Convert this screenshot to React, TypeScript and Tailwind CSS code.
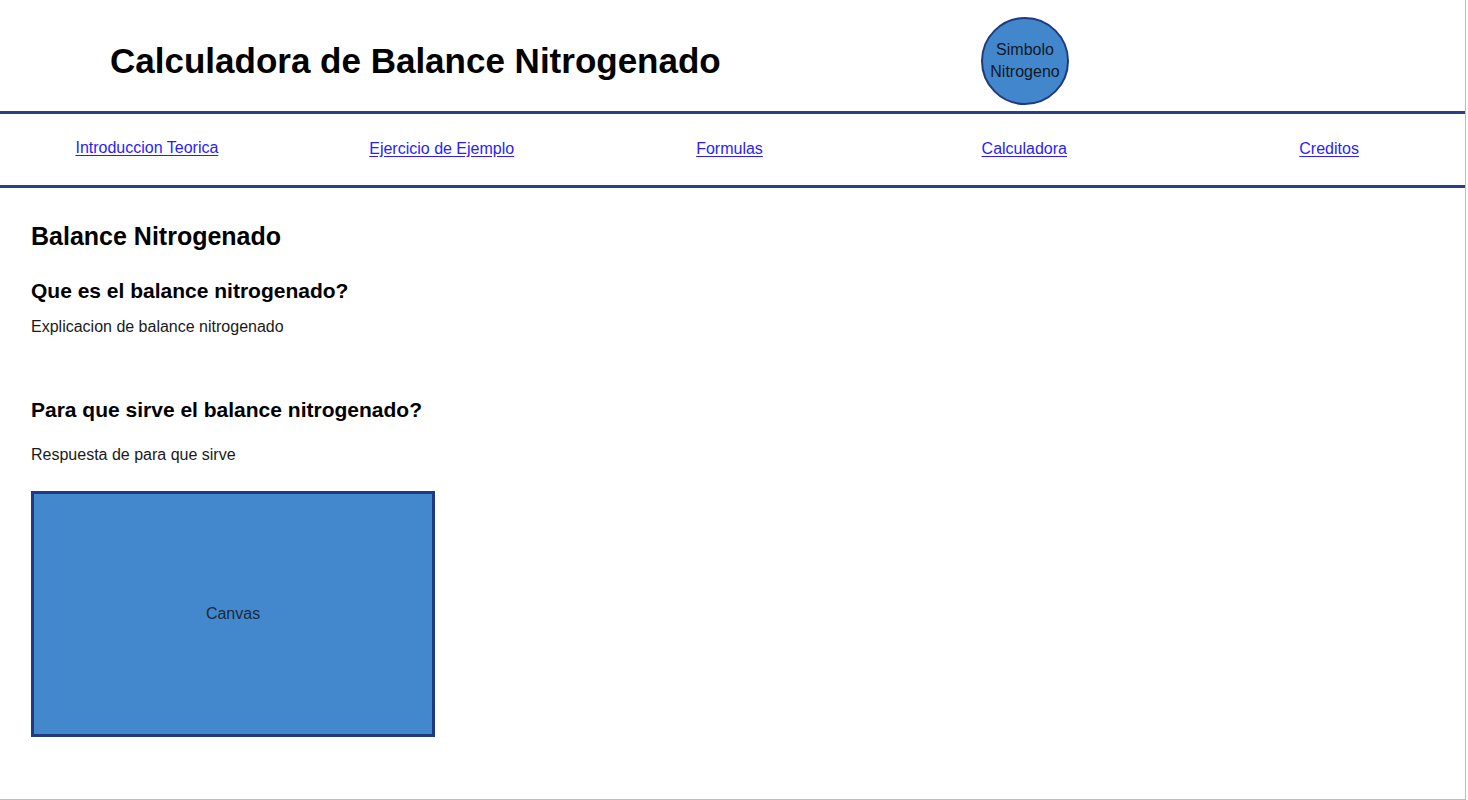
const links = [
    { label: "Introduccion Teorica", col: "w-[294px]", shift: "-mt-[3px]" },
    { label: "Ejercicio de Ejemplo", col: "w-[296px]", shift: "-mt-[1px]" },
    { label: "Formulas", col: "w-[280px]", shift: "-mt-[1px]" },
    { label: "Calculadora", col: "w-[310px]", shift: "-mt-[1px]" },
    { label: "Creditos", col: "w-[286px] pl-[14px]", shift: "-mt-[1px]" },
];

function Header() {
    return (
        <header className="flex h-[111px] items-center pt-[10px]">
            <h1 className="pl-[110px] w-[981px] text-[35px] font-bold leading-none text-black">
                Calculadora de Balance Nitrogenado
            </h1>
            <div className="flex h-[88px] w-[88px] items-center justify-center rounded-full border-2 border-[#1f3a80] bg-[#4287cc] text-center text-[16px] leading-[22px] text-[#111827]">
                Simbolo
                <br />
                Nitrogeno
            </div>
        </header>
    );
}

function NavBar() {
    return (
        <nav className="flex h-[77px] items-center border-y-[3px] border-[#2b3f86]">
            {links.map((link) => (
                <div key={link.label} className={`${link.col} flex justify-center`}>
                    <a href="#" className={`${link.shift} text-[16px] leading-5 text-[#2a1cff] underline underline-offset-2`}>
                        {link.label}
                    </a>
                </div>
            ))}
        </nav>
    );
}

export default function App() {
    return (
        <div className="h-[800px] w-[1466px] overflow-hidden border-r border-b border-[#b8bdc9] bg-white font-['Liberation_Sans',Arial,sans-serif]">
            <Header />
            <NavBar />
            <main className="pl-[31px] pt-[33px] text-[#1a1a1a]">
                <h2 className="text-[25px] font-bold leading-[30px] text-black">Balance Nitrogenado</h2>
                <h3 className="mt-[27px] text-[21px] font-bold leading-[26px] text-black">Que es el balance nitrogenado?</h3>
                <p className="mt-[13px] text-[16px] leading-5">Explicacion de balance nitrogenado</p>
                <h3 className="mt-[60px] text-[21px] font-bold leading-[26px] text-black">Para que sirve el balance nitrogenado?</h3>
                <p className="mt-[22px] text-[16px] leading-5">Respuesta de para que sirve</p>
                <div className="mt-[26px] flex h-[246px] w-[404px] items-center justify-center border-[3px] border-[#1f3a80] bg-[#4388cc] text-[16px] text-[#1d2a3a]">
                    Canvas
                </div>
            </main>
        </div>
    );
}
